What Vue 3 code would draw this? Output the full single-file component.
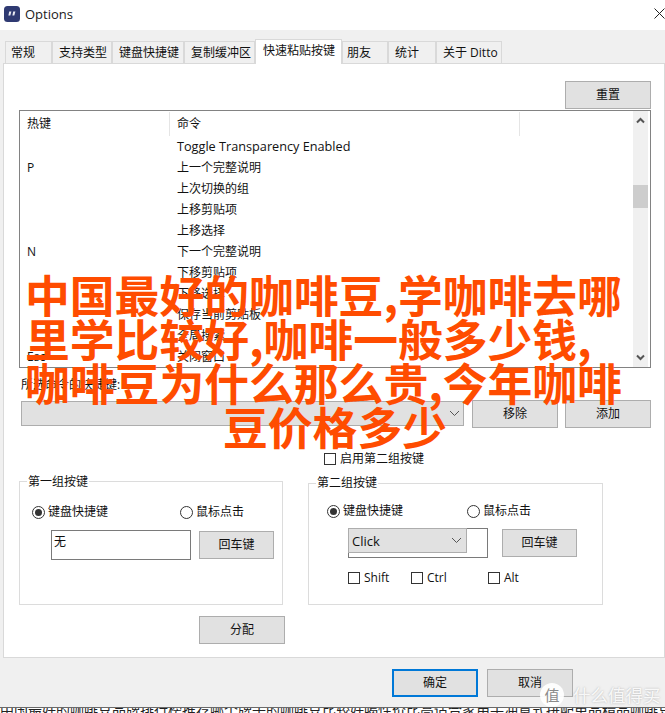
<script setup>
const tabs = [
  { label: '常规', w: 47, pad: 5 },
  { label: '支持类型', w: 60, pad: 6 },
  { label: '键盘快捷键', w: 72, pad: 6 },
  { label: '复制缓冲区', w: 71, pad: 6 },
  { label: '快速粘贴按键', w: 87, pad: 7, active: true },
  { label: '朋友', w: 46, pad: 4 },
  { label: '统计', w: 48, pad: 6 },
  { label: '关于 Ditto', w: 66, pad: 6 }
]
const rows = [
  ['', 'Toggle Transparency Enabled', true],
  ['P', '上一个完整说明'],
  ['', '上次切换的组'],
  ['', '上移剪贴项'],
  ['', '上移选择'],
  ['N', '下一个完整说明'],
  ['', '下移剪贴项'],
  ['', '下移选择'],
  ['', '保存当前剪贴板'],
  ['', '全局搜索'],
  ['Esc', '关闭窗口']
]
const headline = ['中国最好的咖啡豆,学咖啡去哪', '里学比较好,咖啡一般多少钱,', '咖啡豆为什么那么贵,今年咖啡', '豆价格多少']
</script>

<template>
  <div class="window">
    <header class="titlebar">
      <svg class="logo" width="16" height="16" viewBox="0 0 16 16">
        <rect width="16" height="16" rx="3.5" fill="#2f3a72" />
        <path d="M5.2 5.500h2.200L6.300 9.500H4.400zM9.200 5.500h2.200l-1.100 4H8.400z" fill="#e8e9f2" />
      </svg>
      <span class="title">Options</span>
      <svg class="close" width="11" height="11" viewBox="0 0 11 11">
        <path d="M.5.5l10 10M10.500.5l-10 10" stroke="#222" stroke-width="1" fill="none" />
      </svg>
    </header>

    <nav class="tabs">
      <div
        v-for="t in tabs"
        :key="t.label"
        class="tab"
        :class="{ active: t.active }"
        :style="{ width: t.w + 'px', paddingLeft: t.pad + 'px' }"
      >{{ t.label }}</div>
    </nav>

    <section class="panel">
      <div class="reset-row">
        <button class="btn wide">重置</button>
      </div>

      <div class="list">
        <div class="list-main">
          <div class="list-head">
            <div class="col-key">热键</div>
            <div class="col-cmd">命令</div>
          </div>
          <div v-for="(r, i) in rows" :key="i" class="list-row">
            <div class="col-key">{{ r[0] }}</div>
            <div class="col-cmd" :class="{ latin: r[2] }">{{ r[1] }}</div>
          </div>
        </div>
        <div class="scrollbar">
          <svg class="arrow" width="15" height="12" viewBox="0 0 15 12">
            <path d="M4 7.500l3.500-3.500 3.500 3.500" stroke="#555" stroke-width="2" fill="none" />
          </svg>
          <div class="thumb"></div>
          <svg class="arrow down" width="15" height="12" viewBox="0 0 15 12">
            <path d="M4 4.500l3.500 3.500 3.500-3.500" stroke="#555" stroke-width="2" fill="none" />
          </svg>
        </div>
      </div>

      <div class="cmd-label">所选命令的快捷键:</div>

      <div class="combo-row">
        <div class="combo main-combo">
          <svg width="11" height="7" viewBox="0 0 11 7"><path d="M1 1l4.500 4.500L10 1" stroke="#555" stroke-width="1" fill="none" /></svg>
        </div>
        <button class="btn wide remove">移除</button>
        <button class="btn wide add">添加</button>
      </div>

      <label class="enable-row">
        <span class="check"></span>
        <span>启用第二组按键</span>
      </label>

      <div class="groups">
        <fieldset class="group group-a">
          <div class="legend">第一组按键</div>
          <div class="radio-row">
            <span class="radio on"></span><span class="radio-text first">键盘快捷键</span>
            <span class="radio"></span><span class="radio-text">鼠标点击</span>
          </div>
          <div class="input-row">
            <div class="input">无</div>
            <button class="btn enter">回车键</button>
          </div>
        </fieldset>

        <fieldset class="group group-b">
          <div class="legend">第二组按键</div>
          <div class="radio-row">
            <span class="radio on"></span><span class="radio-text first">键盘快捷键</span>
            <span class="radio"></span><span class="radio-text">鼠标点击</span>
          </div>
          <div class="input-row">
            <div class="input with-combo">
              <div class="combo small-combo">
                <span>Click</span>
                <svg width="11" height="7" viewBox="0 0 11 7"><path d="M1 1l4.500 4.500L10 1" stroke="#555" stroke-width="1" fill="none" /></svg>
              </div>
            </div>
            <button class="btn enter">回车键</button>
          </div>
          <div class="mods">
            <label class="mod shift"><span class="check"></span>Shift</label>
            <label class="mod ctrl"><span class="check"></span>Ctrl</label>
            <label class="mod"><span class="check"></span>Alt</label>
          </div>
        </fieldset>
      </div>

      <button class="btn wide assign">分配</button>
    </section>

    <footer class="footer">
      <button class="btn wide ok">确定</button>
      <button class="btn wide">取消</button>
    </footer>

    <div class="strip"><div class="strip-text">中国最好的咖啡豆品牌排行榜推荐哪个牌子的咖啡豆比较好喝性价比高适合家用手冲意式拼配单品精品咖啡豆</div></div>

    <div class="headline">
      <div v-for="(l, i) in headline" :key="i" class="headline-line" :class="{ last: i === 3 }">{{ l }}</div>
    </div>

    <div class="watermark">
      <span class="wm-badge">值</span>
      <span class="wm-text">什么值得买</span>
    </div>
  </div>
</template>

<style scoped>
.window {
  position: relative;
  width: 665px;
  height: 713px;
  overflow: hidden;
  background: #f0f0f0;
  display: flex;
  flex-direction: column;
  font-family: "Open Sans", "Noto Sans CJK SC", sans-serif;
  font-size: 12px;
  color: #111;
}
.titlebar {
  height: 30px;
  flex: none;
  background: #fff;
  display: flex;
  align-items: center;
  padding-left: 4px;
  box-sizing: border-box;
}
.logo { margin-top: -2px; }
.title {
  margin-left: 5px;
  margin-top: -2px;
  font-size: 13px;
  color: #1a1a1a;
}
.close { margin-left: auto; margin-top: -3px; }

.tabs {
  height: 33px;
  flex: none;
  display: flex;
  align-items: flex-end;
  padding-left: 5px;
  position: relative;
  z-index: 1;
}
.tab {
  height: 22px;
  box-sizing: border-box;
  border: 1px solid #d9d9d9;
  border-bottom: none;
  line-height: 21px;
  background: #f0f0f0;
  white-space: nowrap;
}
.tab.active {
  height: 25px;
  background: #fff;
  line-height: 22px;
  margin-bottom: -1px;
}

.panel {
  width: 662px;
  height: 595px;
  flex: none;
  margin-left: 3px;
  box-sizing: border-box;
  background: #fff;
  border: 1px solid #d9d9d9;
  padding: 0 12px 0 15px;
  display: flex;
  flex-direction: column;
  align-items: flex-start;
}
.btn {
  box-sizing: border-box;
  height: 28px;
  border: 1px solid #adadad;
  background: #e1e1e1;
  font: inherit;
  color: #111;
  padding: 0 0 2px;
  display: block;
}
.btn.wide { width: 86px; }

.reset-row {
  margin-top: 17px;
  width: 632px;
  display: flex;
  justify-content: flex-end;
}

.list {
  margin-top: 1px;
  width: 632px;
  height: 258px;
  box-sizing: border-box;
  border: 1px solid #828282;
  display: flex;
  background: #fff;
}
.list-main {
  flex: 1;
  min-width: 0;
}
.list-head {
  display: flex;
  height: 25px;
  margin-top: 1px;
  line-height: 24px;
}
.list-head .col-key,
.list-head .col-cmd {
  border-right: 1px solid #e5e5e5;
  box-sizing: border-box;
  height: 24px;
}
.list-row {
  display: flex;
  height: 21px;
  line-height: 20px;
}
.col-key { width: 150px; padding-left: 7px; box-sizing: border-box; flex: none; }
.col-cmd { width: 350px; padding-left: 7px; box-sizing: border-box; flex: none; white-space: nowrap; }
.col-cmd.latin { font-size: 12.700px; line-height: 19px; }
.scrollbar {
  width: 15px;
  flex: none;
  margin-right: 2px;
  background: #f0f0f0;
  display: flex;
  flex-direction: column;
}
.arrow { display: block; margin-top: 4px; }
.thumb {
  width: 15px;
  height: 23px;
  margin-top: 58px;
  background: #cdcdcd;
}
.arrow.down { margin-top: auto; margin-bottom: 4px; }

.cmd-label {
  margin-top: 9px;
  margin-left: 2px;
  height: 16px;
  line-height: 16px;
}
.combo-row {
  margin-top: 7px;
  display: flex;
  align-items: flex-start;
}
.combo {
  box-sizing: border-box;
  background: #e1e1e1;
  border: 1px solid #adadad;
  display: flex;
  align-items: center;
  justify-content: flex-end;
}
.main-combo {
  width: 443px;
  height: 25px;
  margin-left: 2px;
  margin-top: 1px;
  padding-right: 3px;
}
.remove { margin-left: 8px; }
.add { margin-left: 7px; }

.enable-row {
  margin-top: 23px;
  margin-left: 305px;
  display: flex;
  align-items: center;
  height: 16px;
  line-height: 16px;
}
.check {
  display: block;
  width: 12px;
  height: 12px;
  box-sizing: border-box;
  border: 1px solid #333;
  background: #fff;
  flex: none;
  margin-right: 4px;
}

.groups {
  margin-top: 6px;
  height: 132px;
  width: 632px;
  display: flex;
  align-items: flex-end;
}
.group {
  margin: 0;
  padding: 0;
  box-sizing: border-box;
  border: 1px solid #dcdcdc;
  min-width: 0;
}
.group-a { width: 264px; height: 124px; }
.group-b { width: 295px; height: 122px; margin-left: 25px; }
.legend {
  width: fit-content;
  background: #fff;
  height: 16px;
  line-height: 16px;
  margin-left: 7px;
  padding: 0 1px;
}
.group-a .legend { margin-top: -8px; }
.group-b .legend { margin-top: -9px; }
.radio-row {
  display: flex;
  align-items: center;
  height: 16px;
  line-height: 16px;
}
.group-a .radio-row { margin-top: 14px; margin-left: 12px; }
.group-b .radio-row { margin-top: 12px; margin-left: 18px; }
.radio {
  width: 13px;
  height: 13px;
  box-sizing: border-box;
  border: 1px solid #333;
  border-radius: 50%;
  background: #fff;
  flex: none;
  margin-right: 3px;
  position: relative;
}
.radio.on::after {
  content: "";
  position: absolute;
  left: 2px;
  top: 2px;
  width: 7px;
  height: 7px;
  border-radius: 50%;
  background: #333;
}
.radio-text.first { width: 132px; }
.group-b .radio-text.first { width: 124px; }

.input-row {
  display: flex;
  align-items: center;
  height: 30px;
}
.group-a .input-row { margin-top: 10px; margin-left: 31px; }
.group-b .input-row { margin-top: 9px; margin-left: 39px; }
.input {
  box-sizing: border-box;
  width: 140px;
  height: 30px;
  border: 1px solid #7a7a7a;
  background: #fff;
  padding: 0 2px;
  line-height: 22px;
}
.with-combo { padding: 0; }
.small-combo {
  width: 119px;
  height: 25px;
  margin: -1px 0 0 -1px;
  justify-content: space-between;
  padding: 0 4px 0 3px;
  font-size: 13px;
}
.enter { width: 75px; margin-left: 8px; }
.group-b .enter { margin-left: 14px; }

.mods {
  display: flex;
  margin-top: 12px;
  margin-left: 39px;
  height: 16px;
  line-height: 16px;
}
.mod {
  display: flex;
  align-items: center;
}
.mod.shift { width: 63px; }
.mod.ctrl { width: 77px; }

.assign { margin-top: 11px; margin-left: 180px; }

.footer {
  flex: none;
  display: flex;
  gap: 9px;
  margin-top: 11px;
  padding-left: 392px;
}
.ok { border: 2px solid #0078d7; }

.strip {
  margin-top: 10px;
  flex: 1;
  background: #fff;
  border-top: 1px solid #6a6a6a;
  overflow: hidden;
  position: relative;
}
.strip-text {
  margin-top: -7px;
  font-size: 14px;
  line-height: 18px;
  white-space: nowrap;
  color: #222;
}

.headline {
  position: absolute;
  left: 25px;
  top: 272px;
  color: #ff4c00;
  font-family: "Noto Sans CJK SC", sans-serif;
  font-weight: 700;
  font-size: 44.800px;
  line-height: 44px;
  white-space: nowrap;
}
.headline-line.last { margin-left: 198px; }

.watermark {
  position: absolute;
  left: 540px;
  top: 683px;
  display: flex;
  align-items: center;
}
.wm-badge {
  width: 24px;
  height: 24px;
  border-radius: 50%;
  background: rgba(255, 255, 255, 0.92);
  color: #8a8a8a;
  font-family: "Noto Sans CJK SC", sans-serif;
  font-size: 15px;
  line-height: 23px;
  text-align: center;
}
.wm-text {
  margin-left: 9px;
  font-family: "Noto Sans CJK SC", sans-serif;
  font-size: 17.500px;
  line-height: 24px;
  color: rgba(255, 255, 255, 0.9);
  text-shadow: 0 0 2px rgba(120, 120, 120, 0.55);
  white-space: nowrap;
}
</style>
